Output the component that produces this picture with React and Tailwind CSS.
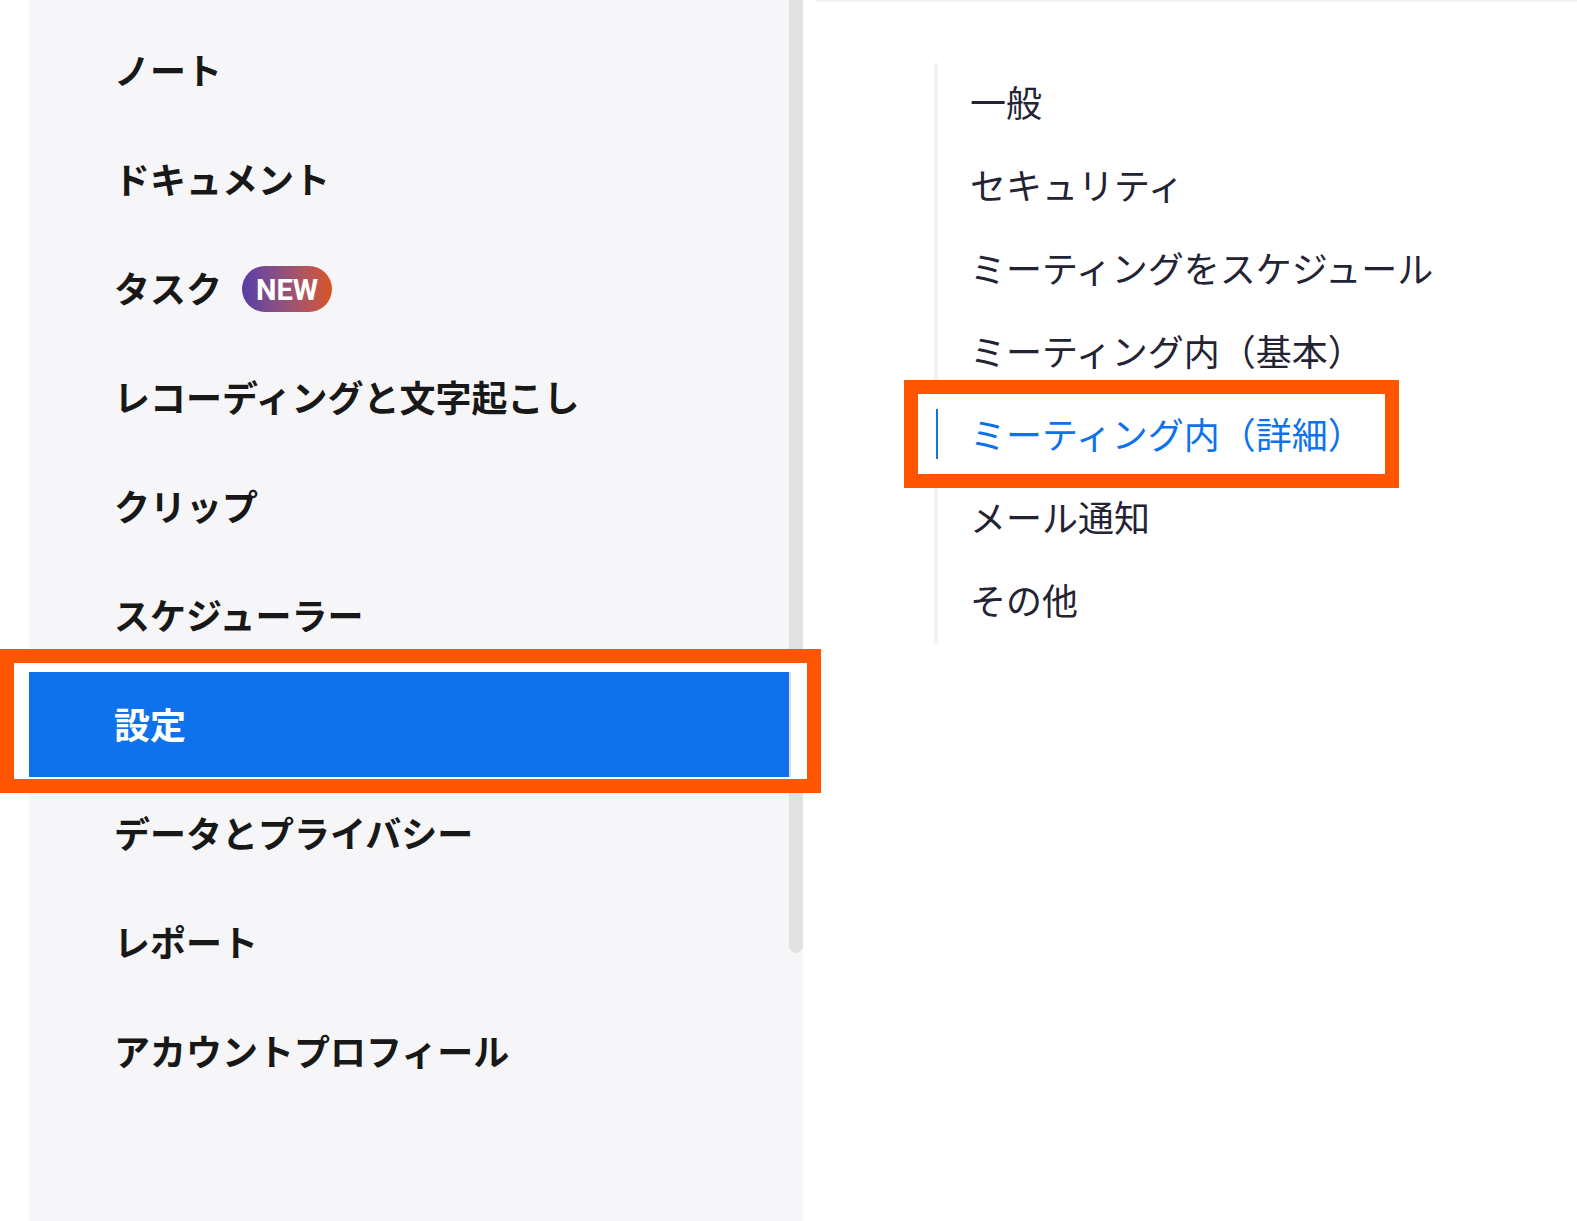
import React from 'react';

const mainMenu = [
  { label: 'ノート' },
  { label: 'ドキュメント' },
  { label: 'タスク', badge: true },
  { label: 'レコーディングと文字起こし' },
  { label: 'クリップ' },
  { label: 'スケジューラー' },
  { label: '設定', active: true },
  { label: 'データとプライバシー' },
  { label: 'レポート' },
  { label: 'アカウントプロフィール' },
];

const subMenu = [
  { label: '一般' },
  { label: 'セキュリティ' },
  { label: 'ミーティングをスケジュール' },
  { label: 'ミーティング内（基本）' },
  { label: 'ミーティング内（詳細）', active: true },
  { label: 'メール通知' },
  { label: 'その他' },
];

const jp = { fontFamily: '"Noto Sans CJK JP", "Noto Sans", sans-serif' };

export default function App() {
  return (
    <div className="relative w-[1577px] h-[1221px] bg-white flex overflow-hidden" style={jp}>
      <div className="w-[29px] shrink-0" />

      {/* left settings nav */}
      <aside className="w-[774px] shrink-0 bg-[#f6f6f9] flex">
        <nav className="w-[760px] pt-[18px] flex flex-col gap-[4px]">
          {mainMenu.map(item => (
            <div
              key={item.label}
              className={`h-[105px] flex items-center pl-[85px] pb-[4px] text-[36px] font-bold leading-none ${item.active ? 'bg-[#0e72ed] text-white' : 'text-[#181818]'}`}
            >
              {item.label}
              {item.badge && (
                <span
                  className="ml-[20px] mt-[4px] pt-[3px] h-[46px] w-[90px] rounded-full bg-gradient-to-r from-[#5a3aa9] to-[#d8531c] text-white text-[29px] font-bold flex items-center justify-center"
                  style={{ fontFamily: '"Liberation Sans Narrow", "Roboto", "Liberation Sans", sans-serif' }}
                >
                  NEW
                </span>
              )}
            </div>
          ))}
        </nav>
        <div className="w-[14px] flex flex-col">
          <div className="h-[953px] bg-[#e1e1e1] rounded-b-full" />
        </div>
      </aside>

      {/* right sub nav */}
      <main className="flex-1 ml-[12px] border-t-2 border-[#f4f4f6]">
        <ul className="ml-[119px] mt-[61px] w-[520px] border-l-4 border-[#f0f2f5]">
          {subMenu.map(item => (
            <li
              key={item.label}
              className={`relative h-[83px] flex items-center pl-[32px] pb-[8px] text-[36px] leading-none ${item.active ? 'text-[#0e72ed]' : 'text-[#232333]'}`}
            >
              {item.active && <span className="absolute -left-[4px] top-[14px] w-[4px] h-[51px] bg-[#0e72ed]" />}
              {item.label}
            </li>
          ))}
        </ul>
      </main>

      {/* annotation frames */}
      <div className="absolute left-0 top-[649px] w-[821px] h-[144px] border-[14px] border-[#ff5500] pointer-events-none">
        <div className="w-full h-full border-white border-t-[9px] border-r-[16px] border-b-[2px] border-l-[15px]" />
      </div>
      <div className="absolute left-[904px] top-[380px] w-[495px] h-[108px] border-[14px] border-[#ff5500] pointer-events-none">
        <div className="w-full h-full border-white border-t-[14px] border-b-[15px] border-l-[18px] border-r-0" />
      </div>
    </div>
  );
}
